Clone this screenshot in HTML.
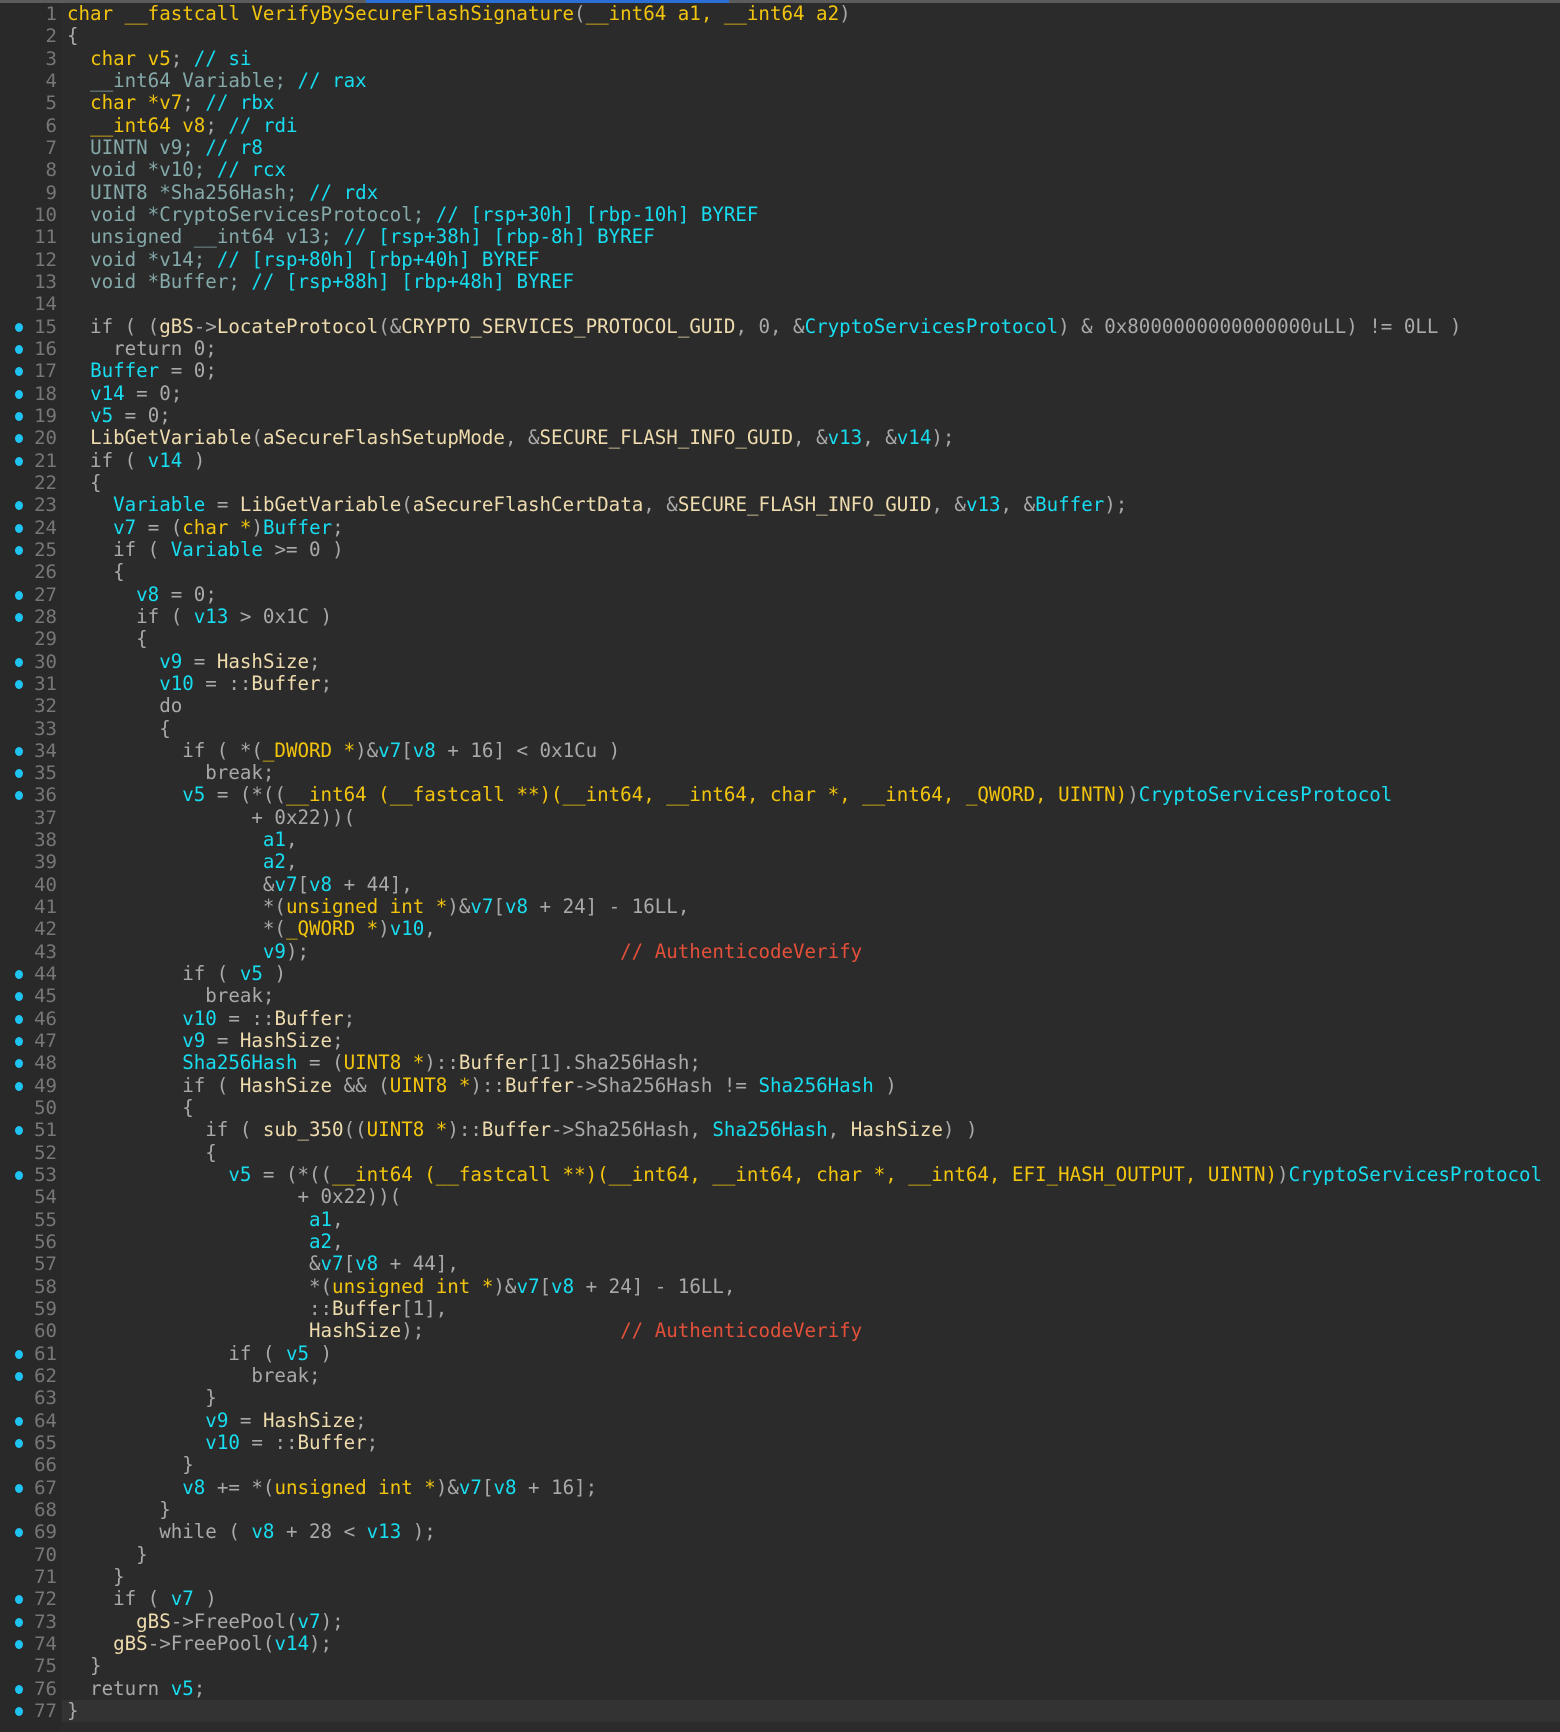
<!DOCTYPE html>
<html><head><meta charset="utf-8"><style>
html,body{margin:0;padding:0;background:#2b2b2b;width:1560px;height:1732px;overflow:hidden}
#top{position:absolute;left:0;top:0;width:1560px;height:3px;background:#5c5c5c}
#blue{position:absolute;left:366px;top:0;width:363px;height:3px;background:#2a6fd6}
#gut{position:absolute;left:0;top:3px;width:61px;height:1729px;background:#292929}
#code{position:absolute;left:0;top:3px;width:1560px;font-family:"DejaVu Sans Mono","Liberation Mono",monospace;font-size:19.15px}
.l{position:relative;height:22.34px;line-height:22.34px;white-space:pre}
.n{position:absolute;left:0;width:57px;text-align:right;color:#777;font-size:19px}
.d{position:absolute;left:15px;top:7px;width:8px;height:9px;border-radius:50%;background:#1fc3f2}
.t{position:absolute;left:67px;color:#a9a9a9}
.hl{position:absolute;left:62px;right:0;top:0;bottom:0;background:#333}
.y{color:#f2c40e}.c{color:#18dcef}.f{color:#efdcae}.m{color:#85a9a9}.r{color:#e4503a}
</style></head><body>
<div id="top"></div><div id="blue"></div><div id="gut"></div>
<div id="code">
<div class="l"><span class="n">1</span><span class="t"><span class="y">char __fastcall VerifyBySecureFlashSignature</span>(<span class="y">__int64 a1, __int64 a2</span>)</span></div>
<div class="l"><span class="n">2</span><span class="t">{</span></div>
<div class="l"><span class="n">3</span><span class="t">  <span class="y">char v5</span>; <span class="c">// si</span></span></div>
<div class="l"><span class="n">4</span><span class="t">  <span class="m">__int64 Variable;</span> <span class="c">// rax</span></span></div>
<div class="l"><span class="n">5</span><span class="t">  <span class="y">char *v7</span>; <span class="c">// rbx</span></span></div>
<div class="l"><span class="n">6</span><span class="t">  <span class="y">__int64 v8</span>; <span class="c">// rdi</span></span></div>
<div class="l"><span class="n">7</span><span class="t">  <span class="m">UINTN v9;</span> <span class="c">// r8</span></span></div>
<div class="l"><span class="n">8</span><span class="t">  <span class="m">void *v10;</span> <span class="c">// rcx</span></span></div>
<div class="l"><span class="n">9</span><span class="t">  <span class="m">UINT8 *Sha256Hash;</span> <span class="c">// rdx</span></span></div>
<div class="l"><span class="n">10</span><span class="t">  <span class="m">void *CryptoServicesProtocol;</span> <span class="c">// [rsp+30h] [rbp-10h] BYREF</span></span></div>
<div class="l"><span class="n">11</span><span class="t">  <span class="m">unsigned __int64 v13;</span> <span class="c">// [rsp+38h] [rbp-8h] BYREF</span></span></div>
<div class="l"><span class="n">12</span><span class="t">  <span class="m">void *v14;</span> <span class="c">// [rsp+80h] [rbp+40h] BYREF</span></span></div>
<div class="l"><span class="n">13</span><span class="t">  <span class="m">void *Buffer;</span> <span class="c">// [rsp+88h] [rbp+48h] BYREF</span></span></div>
<div class="l"><span class="n">14</span><span class="t"></span></div>
<div class="l"><span class="d"></span><span class="n">15</span><span class="t">  if ( (<span class="f">gBS</span>-&gt;<span class="f">LocateProtocol</span>(&amp;<span class="f">CRYPTO_SERVICES_PROTOCOL_GUID</span>, 0, &amp;<span class="c">CryptoServicesProtocol</span>) &amp; 0x8000000000000000uLL) != 0LL )</span></div>
<div class="l"><span class="d"></span><span class="n">16</span><span class="t">    return 0;</span></div>
<div class="l"><span class="d"></span><span class="n">17</span><span class="t">  <span class="c">Buffer</span> = 0;</span></div>
<div class="l"><span class="d"></span><span class="n">18</span><span class="t">  <span class="c">v14</span> = 0;</span></div>
<div class="l"><span class="d"></span><span class="n">19</span><span class="t">  <span class="c">v5</span> = 0;</span></div>
<div class="l"><span class="d"></span><span class="n">20</span><span class="t">  <span class="f">LibGetVariable</span>(<span class="f">aSecureFlashSetupMode</span>, &amp;<span class="f">SECURE_FLASH_INFO_GUID</span>, &amp;<span class="c">v13</span>, &amp;<span class="c">v14</span>);</span></div>
<div class="l"><span class="d"></span><span class="n">21</span><span class="t">  if ( <span class="c">v14</span> )</span></div>
<div class="l"><span class="n">22</span><span class="t">  {</span></div>
<div class="l"><span class="d"></span><span class="n">23</span><span class="t">    <span class="c">Variable</span> = <span class="f">LibGetVariable</span>(<span class="f">aSecureFlashCertData</span>, &amp;<span class="f">SECURE_FLASH_INFO_GUID</span>, &amp;<span class="c">v13</span>, &amp;<span class="c">Buffer</span>);</span></div>
<div class="l"><span class="d"></span><span class="n">24</span><span class="t">    <span class="c">v7</span> = (<span class="y">char *</span>)<span class="c">Buffer</span>;</span></div>
<div class="l"><span class="d"></span><span class="n">25</span><span class="t">    if ( <span class="c">Variable</span> &gt;= 0 )</span></div>
<div class="l"><span class="n">26</span><span class="t">    {</span></div>
<div class="l"><span class="d"></span><span class="n">27</span><span class="t">      <span class="c">v8</span> = 0;</span></div>
<div class="l"><span class="d"></span><span class="n">28</span><span class="t">      if ( <span class="c">v13</span> &gt; 0x1C )</span></div>
<div class="l"><span class="n">29</span><span class="t">      {</span></div>
<div class="l"><span class="d"></span><span class="n">30</span><span class="t">        <span class="c">v9</span> = <span class="f">HashSize</span>;</span></div>
<div class="l"><span class="d"></span><span class="n">31</span><span class="t">        <span class="c">v10</span> = ::<span class="f">Buffer</span>;</span></div>
<div class="l"><span class="n">32</span><span class="t">        do</span></div>
<div class="l"><span class="n">33</span><span class="t">        {</span></div>
<div class="l"><span class="d"></span><span class="n">34</span><span class="t">          if ( *(<span class="y">_DWORD *</span>)&amp;<span class="c">v7</span>[<span class="c">v8</span> + 16] &lt; 0x1Cu )</span></div>
<div class="l"><span class="d"></span><span class="n">35</span><span class="t">            break;</span></div>
<div class="l"><span class="d"></span><span class="n">36</span><span class="t">          <span class="c">v5</span> = (*((<span class="y">__int64 (__fastcall **)(__int64, __int64, char *, __int64, _QWORD, UINTN)</span>)<span class="c">CryptoServicesProtocol</span></span></div>
<div class="l"><span class="n">37</span><span class="t">                + 0x22))(</span></div>
<div class="l"><span class="n">38</span><span class="t">                 <span class="c">a1</span>,</span></div>
<div class="l"><span class="n">39</span><span class="t">                 <span class="c">a2</span>,</span></div>
<div class="l"><span class="n">40</span><span class="t">                 &amp;<span class="c">v7</span>[<span class="c">v8</span> + 44],</span></div>
<div class="l"><span class="n">41</span><span class="t">                 *(<span class="y">unsigned int *</span>)&amp;<span class="c">v7</span>[<span class="c">v8</span> + 24] - 16LL,</span></div>
<div class="l"><span class="n">42</span><span class="t">                 *(<span class="y">_QWORD *</span>)<span class="c">v10</span>,</span></div>
<div class="l"><span class="n">43</span><span class="t">                 <span class="c">v9</span>);                           <span class="r">// AuthenticodeVerify</span></span></div>
<div class="l"><span class="d"></span><span class="n">44</span><span class="t">          if ( <span class="c">v5</span> )</span></div>
<div class="l"><span class="d"></span><span class="n">45</span><span class="t">            break;</span></div>
<div class="l"><span class="d"></span><span class="n">46</span><span class="t">          <span class="c">v10</span> = ::<span class="f">Buffer</span>;</span></div>
<div class="l"><span class="d"></span><span class="n">47</span><span class="t">          <span class="c">v9</span> = <span class="f">HashSize</span>;</span></div>
<div class="l"><span class="d"></span><span class="n">48</span><span class="t">          <span class="c">Sha256Hash</span> = (<span class="y">UINT8 *</span>)::<span class="f">Buffer</span>[1].Sha256Hash;</span></div>
<div class="l"><span class="d"></span><span class="n">49</span><span class="t">          if ( <span class="f">HashSize</span> &amp;&amp; (<span class="y">UINT8 *</span>)::<span class="f">Buffer</span>-&gt;Sha256Hash != <span class="c">Sha256Hash</span> )</span></div>
<div class="l"><span class="n">50</span><span class="t">          {</span></div>
<div class="l"><span class="d"></span><span class="n">51</span><span class="t">            if ( <span class="f">sub_350</span>((<span class="y">UINT8 *</span>)::<span class="f">Buffer</span>-&gt;Sha256Hash, <span class="c">Sha256Hash</span>, <span class="f">HashSize</span>) )</span></div>
<div class="l"><span class="n">52</span><span class="t">            {</span></div>
<div class="l"><span class="d"></span><span class="n">53</span><span class="t">              <span class="c">v5</span> = (*((<span class="y">__int64 (__fastcall **)(__int64, __int64, char *, __int64, EFI_HASH_OUTPUT, UINTN)</span>)<span class="c">CryptoServicesProtocol</span></span></div>
<div class="l"><span class="n">54</span><span class="t">                    + 0x22))(</span></div>
<div class="l"><span class="n">55</span><span class="t">                     <span class="c">a1</span>,</span></div>
<div class="l"><span class="n">56</span><span class="t">                     <span class="c">a2</span>,</span></div>
<div class="l"><span class="n">57</span><span class="t">                     &amp;<span class="c">v7</span>[<span class="c">v8</span> + 44],</span></div>
<div class="l"><span class="n">58</span><span class="t">                     *(<span class="y">unsigned int *</span>)&amp;<span class="c">v7</span>[<span class="c">v8</span> + 24] - 16LL,</span></div>
<div class="l"><span class="n">59</span><span class="t">                     ::<span class="f">Buffer</span>[1],</span></div>
<div class="l"><span class="n">60</span><span class="t">                     <span class="f">HashSize</span>);                 <span class="r">// AuthenticodeVerify</span></span></div>
<div class="l"><span class="d"></span><span class="n">61</span><span class="t">              if ( <span class="c">v5</span> )</span></div>
<div class="l"><span class="d"></span><span class="n">62</span><span class="t">                break;</span></div>
<div class="l"><span class="n">63</span><span class="t">            }</span></div>
<div class="l"><span class="d"></span><span class="n">64</span><span class="t">            <span class="c">v9</span> = <span class="f">HashSize</span>;</span></div>
<div class="l"><span class="d"></span><span class="n">65</span><span class="t">            <span class="c">v10</span> = ::<span class="f">Buffer</span>;</span></div>
<div class="l"><span class="n">66</span><span class="t">          }</span></div>
<div class="l"><span class="d"></span><span class="n">67</span><span class="t">          <span class="c">v8</span> += *(<span class="y">unsigned int *</span>)&amp;<span class="c">v7</span>[<span class="c">v8</span> + 16];</span></div>
<div class="l"><span class="n">68</span><span class="t">        }</span></div>
<div class="l"><span class="d"></span><span class="n">69</span><span class="t">        while ( <span class="c">v8</span> + 28 &lt; <span class="c">v13</span> );</span></div>
<div class="l"><span class="n">70</span><span class="t">      }</span></div>
<div class="l"><span class="n">71</span><span class="t">    }</span></div>
<div class="l"><span class="d"></span><span class="n">72</span><span class="t">    if ( <span class="c">v7</span> )</span></div>
<div class="l"><span class="d"></span><span class="n">73</span><span class="t">      <span class="f">gBS</span>-&gt;FreePool(<span class="c">v7</span>);</span></div>
<div class="l"><span class="d"></span><span class="n">74</span><span class="t">    <span class="f">gBS</span>-&gt;FreePool(<span class="c">v14</span>);</span></div>
<div class="l"><span class="n">75</span><span class="t">  }</span></div>
<div class="l"><span class="d"></span><span class="n">76</span><span class="t">  return <span class="c">v5</span>;</span></div>
<div class="l"><span class="hl"></span><span class="d"></span><span class="n">77</span><span class="t">}</span></div>
</div>
</body></html>
